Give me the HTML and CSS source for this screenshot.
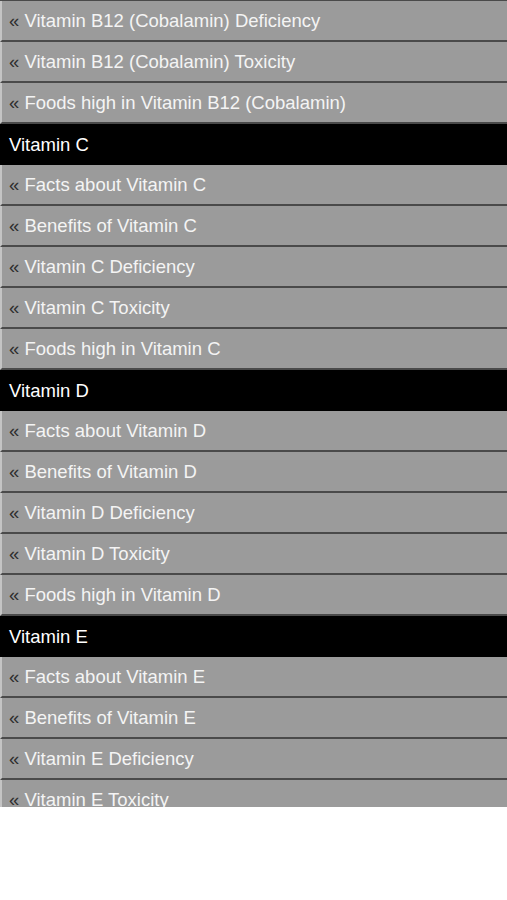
FILE: index.html
```html
<!DOCTYPE html>
<html>
<head>
<meta charset="utf-8">
<link rel="stylesheet" href="styles.css">
</head>
<body>
<div class="menu">
  <a class="item"><span class="raquo">«</span> Vitamin B12 (Cobalamin) Deficiency</a>
  <a class="item"><span class="raquo">«</span> Vitamin B12 (Cobalamin) Toxicity</a>
  <a class="item"><span class="raquo">«</span> Foods high in Vitamin B12 (Cobalamin)</a>
  <div class="head">Vitamin C</div>
  <a class="item"><span class="raquo">«</span> Facts about Vitamin C</a>
  <a class="item"><span class="raquo">«</span> Benefits of Vitamin C</a>
  <a class="item"><span class="raquo">«</span> Vitamin C Deficiency</a>
  <a class="item"><span class="raquo">«</span> Vitamin C Toxicity</a>
  <a class="item"><span class="raquo">«</span> Foods high in Vitamin C</a>
  <div class="head">Vitamin D</div>
  <a class="item"><span class="raquo">«</span> Facts about Vitamin D</a>
  <a class="item"><span class="raquo">«</span> Benefits of Vitamin D</a>
  <a class="item"><span class="raquo">«</span> Vitamin D Deficiency</a>
  <a class="item"><span class="raquo">«</span> Vitamin D Toxicity</a>
  <a class="item"><span class="raquo">«</span> Foods high in Vitamin D</a>
  <div class="head">Vitamin E</div>
  <a class="item"><span class="raquo">«</span> Facts about Vitamin E</a>
  <a class="item"><span class="raquo">«</span> Benefits of Vitamin E</a>
  <a class="item"><span class="raquo">«</span> Vitamin E Deficiency</a>
  <a class="item"><span class="raquo">«</span> Vitamin E Toxicity</a>
</div>
</body>
</html>
```
FILE: styles.css
```css
html, body {
  margin: 0;
  padding: 0;
  background: #ffffff;
}
.menu {
  height: 806px;
  overflow: hidden;
  border-top: 1px solid #4a4a4a;
  font-family: "Liberation Sans", Arial, sans-serif;
  font-size: 18.5px;
}
.item {
  display: flex;
  align-items: center;
  height: 39px;
  padding-left: 7px;
  background: #9b9b9b;
  border-left: 2px solid #c4c4c4;
  border-bottom: 2px solid #4a4a4a;
  color: #f4f4f4;
  white-space: pre;
}
.raquo {
  color: #2e2e2e;
}
.head {
  display: flex;
  align-items: center;
  height: 41px;
  padding-left: 9px;
  padding-top: 1px;
  box-sizing: border-box;
  background: #000000;
  color: #ffffff;
}
```
